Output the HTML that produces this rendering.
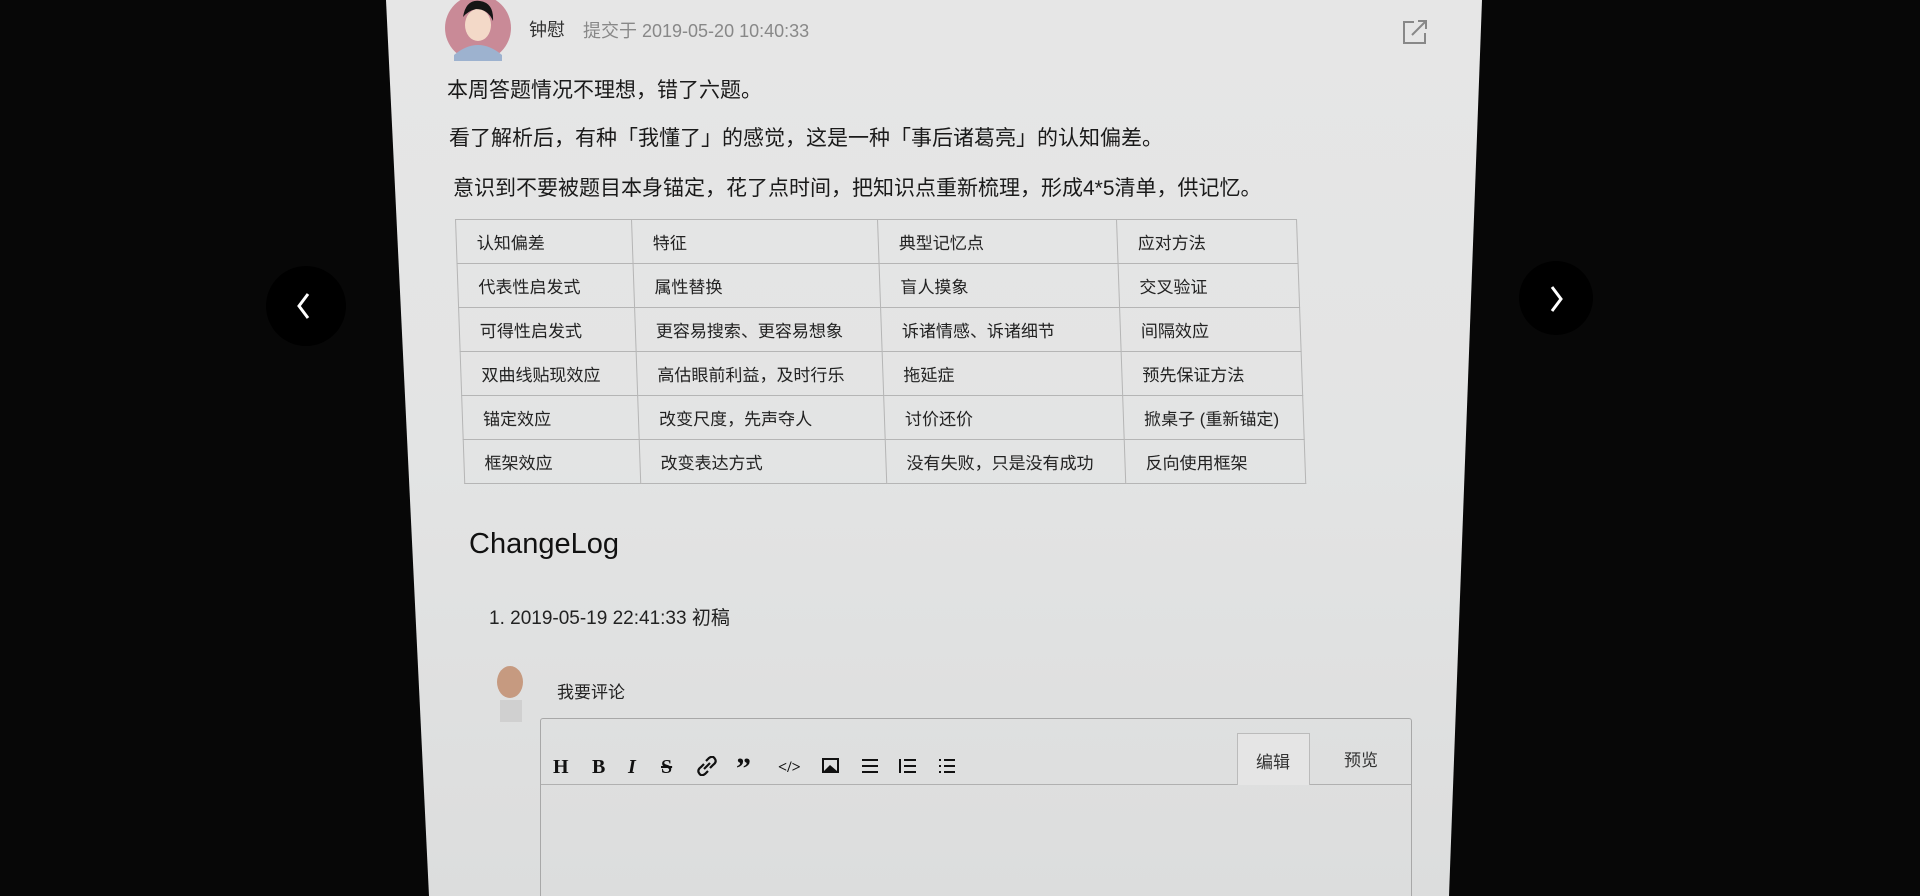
<!DOCTYPE html>
<html><head><meta charset="utf-8"><style>
*{margin:0;padding:0;box-sizing:border-box}
html,body{width:1920px;height:896px;overflow:hidden;background:#070707}
#w{width:1920px;height:896px;position:relative;overflow:hidden;font-family:"Liberation Sans","Noto Sans CJK SC",sans-serif;color:#1a1a1a;background:#070707}
.page{position:absolute;left:0;top:0;width:1920px;height:896px;background:linear-gradient(180deg,#e6e6e6 0%,#e3e4e4 50%,#dcdddd 100%);clip-path:polygon(386px 0,1482px 0,1449px 896px,429px 896px)}
.a{position:absolute;white-space:nowrap}
table{position:absolute;left:455px;top:219px;border-collapse:collapse;font-size:17px;color:#222;transform:skewX(2deg);transform-origin:0 0}
td{border:1px solid #b5b5b5;height:44px;padding:0 20px;vertical-align:middle}
.circ{position:absolute;border-radius:50%;background:#000}
.tb{position:absolute;top:756px;font-weight:bold;font-size:20px;font-family:"Liberation Serif",serif;color:#111}
</style></head><body><div id="w">
<div class="circ" style="left:266px;top:266px;width:80px;height:80px"></div>
<svg class="a" style="left:292px;top:290px" width="26" height="32"><path d="M16 4 L7 16 L16 28" stroke="#fff" stroke-width="3" fill="none"/></svg>
<div class="circ" style="left:1519px;top:261px;width:74px;height:74px"></div>
<svg class="a" style="left:1544px;top:283px" width="26" height="32"><path d="M8 4 L17 16 L8 28" stroke="#fff" stroke-width="3" fill="none"/></svg>
<div class="page"></div>
<svg class="a" style="left:444px;top:-5px" width="70" height="66"><circle cx="34" cy="33" r="33" fill="#c98a97"/><ellipse cx="34" cy="30" rx="13" ry="16" fill="#f3d9c8"/><path d="M19 22 Q22 4 36 6 Q50 8 49 26 Q44 14 32 14 Q24 16 19 22Z" fill="#151515"/><path d="M10 60 Q34 40 58 60 L58 66 L10 66Z" fill="#9db2cf"/></svg>
<div class="a" style="left:529px;top:16px;font-size:18px;color:#333">钟慰</div>
<div class="a" style="left:583px;top:17px;font-size:18px;color:#888">提交于 2019-05-20 10:40:33</div>
<svg class="a" style="left:1400px;top:17px" width="30" height="30"><path d="M14 5 H4 V26 H25 V16" stroke="#888" stroke-width="2" fill="none"/><path d="M12 18 L25 5 M18 4 H26 V12" stroke="#888" stroke-width="2" fill="none"/></svg>
<div class="a" style="left:447px;top:74px;font-size:21px">本周答题情况不理想，错了六题。</div>
<div class="a" style="left:449px;top:122px;font-size:21px">看了解析后，有种「我懂了」的感觉，这是一种「事后诸葛亮」的认知偏差。</div>
<div class="a" style="left:453px;top:172px;font-size:21px">意识到不要被题目本身锚定，花了点时间，把知识点重新梳理，形成4*5清单，供记忆。</div>
<table>
<tr><td style="width:176px">认知偏差</td><td style="width:246px">特征</td><td style="width:239px">典型记忆点</td><td style="width:180px">应对方法</td></tr>
<tr><td>代表性启发式</td><td>属性替换</td><td>盲人摸象</td><td>交叉验证</td></tr>
<tr><td>可得性启发式</td><td>更容易搜索、更容易想象</td><td>诉诸情感、诉诸细节</td><td>间隔效应</td></tr>
<tr><td>双曲线贴现效应</td><td>高估眼前利益，及时行乐</td><td>拖延症</td><td>预先保证方法</td></tr>
<tr><td>锚定效应</td><td>改变尺度，先声夺人</td><td>讨价还价</td><td>掀桌子 (重新锚定)</td></tr>
<tr><td>框架效应</td><td>改变表达方式</td><td>没有失败，只是没有成功</td><td>反向使用框架</td></tr>
</table>
<div class="a" style="left:469px;top:528px;font-size:29px;color:#111">ChangeLog</div>
<div class="a" style="left:489px;top:603px;font-size:19px;color:#222">1. 2019-05-19 22:41:33 初稿</div>
<svg class="a" style="left:490px;top:664px" width="40" height="60"><ellipse cx="20" cy="18" rx="13" ry="16" fill="#c69a80"/><rect x="10" y="36" width="22" height="22" fill="#d0d0d0"/></svg>
<div class="a" style="left:557px;top:678px;font-size:17px;color:#222">我要评论</div>
<div class="a" style="left:540px;top:718px;width:872px;height:190px;border:1px solid #a8a8a8;border-radius:3px"></div>
<div class="a" style="left:541px;top:784px;width:870px;border-top:1px solid #b0b0b0"></div>
<div class="a" style="left:1237px;top:733px;width:73px;height:52px;border:1px solid #bbb;border-bottom:none;background:#e5e5e5"></div>
<div class="a" style="left:1256px;top:748px;font-size:17px;color:#333">编辑</div>
<div class="a" style="left:1344px;top:746px;font-size:17px;color:#333">预览</div>
<div class="tb" style="left:553px">H</div>
<div class="tb" style="left:592px">B</div>
<div class="tb" style="left:628px;font-style:italic">I</div>
<div class="tb" style="left:661px;text-decoration:line-through">S</div>
<svg class="a" style="left:697px;top:756px" width="20" height="20"><path d="M9 5 L12 2 Q16 -1 18 3 Q20 6 16 9 L13 12 M11 15 L8 18 Q4 21 2 17 Q0 14 4 11 L7 8 M7 13 L13 7" stroke="#111" stroke-width="2.2" fill="none"/></svg>
<div class="tb" style="left:736px;font-size:30px;top:752px">”</div>
<div class="tb" style="left:778px;font-size:16px;top:759px">&lt;/&gt;</div>
<svg class="a" style="left:821px;top:756px" width="20" height="20"><rect x="2" y="3" width="15" height="13" stroke="#111" stroke-width="2" fill="none"/><path d="M3 15 L9 9 L16 15Z" fill="#111"/></svg>
<svg class="a" style="left:860px;top:756px" width="20" height="20"><path d="M2 4H18M2 10H18M2 16H18" stroke="#111" stroke-width="2"/></svg>
<svg class="a" style="left:898px;top:756px" width="20" height="20"><path d="M2 3V17M6 4H18M6 10H18M6 16H18" stroke="#111" stroke-width="2"/></svg>
<svg class="a" style="left:937px;top:756px" width="20" height="20"><path d="M2 4H4M2 10H4M2 16H4M7 4H18M7 10H18M7 16H18" stroke="#111" stroke-width="2"/></svg>
</div></body></html>
